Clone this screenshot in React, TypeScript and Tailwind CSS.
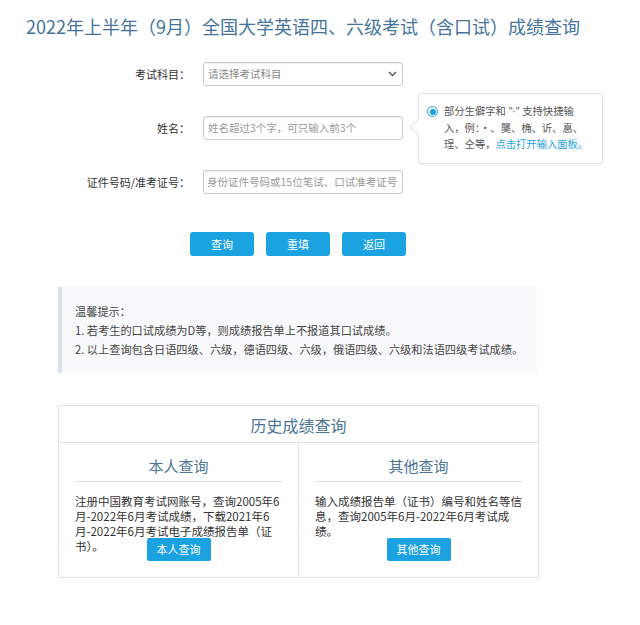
import React from "react";

function Chevron() {
  return (
    <svg width="9" height="6" viewBox="0 0 9 6" fill="none">
      <path d="M1 1l3.5 3.5L8 1" stroke="#555" strokeWidth="1.4" />
    </svg>
  );
}

export default function App() {
  return (
    <div className="w-[640px] min-h-[625px] bg-white font-['Noto_Sans_CJK_SC',sans-serif] text-[#333]">
      <h1 className="pl-[26px] pt-[12px] text-[18px] leading-[28px] text-[#44749c] whitespace-nowrap">
        2022年上半年（9月）全国大学英语四、六级考试（含口试）成绩查询
      </h1>

      <div className="relative mt-[22px]">
        <div className="grid grid-cols-[190px_200px] gap-x-[13px] gap-y-[30px]">
          <div className="text-right text-[11px] leading-[24px] text-[#333]">考试科目：</div>
          <div className="flex h-[24px] items-center justify-between rounded-[3px] border border-[#c9c9c9] pl-[4px] pr-[5px] text-[10.5px] text-[#888] shadow-[inset_0_1px_1px_rgba(0,0,0,0.06)]">
            <span>请选择考试科目</span>
            <Chevron />
          </div>

          <div className="text-right text-[11px] leading-[24px] text-[#333]">姓名：</div>
          <div className="flex h-[24px] items-center rounded-[3px] border border-[#c9c9c9] pl-[4px] text-[10.5px] text-[#999] shadow-[inset_0_1px_1px_rgba(0,0,0,0.06)]">
            姓名超过3个字，可只输入前3个
          </div>

          <div className="text-right text-[11px] leading-[24px] text-[#333]">证件号码/准考证号：</div>
          <div className="flex h-[24px] items-center overflow-hidden whitespace-nowrap rounded-[3px] border border-[#c9c9c9] pl-[3px] text-[10.5px] text-[#999] shadow-[inset_0_1px_1px_rgba(0,0,0,0.06)]">
            身份证件号码或15位笔试、口试准考证号
          </div>
        </div>

        <div className="absolute left-[418px] top-[31px] w-[185px] rounded-[3px] border border-[#dfe3e8] bg-white pb-[11px] pl-[8px] pr-[6px] pt-[9px] shadow-[0_1px_3px_rgba(0,0,0,0.06)]">
          <div className="absolute left-[-7px] top-[27px] h-[12px] w-[12px] rotate-45 border-b border-l border-[#dfe3e8] bg-white" />
          <div className="flex gap-[6px]">
            <div className="mt-[3px] flex h-[11px] w-[11px] shrink-0 items-center justify-center rounded-full border border-[#1ba2e0]">
              <div className="h-[6px] w-[6px] rounded-full bg-[#1ba2e0]" />
            </div>
            <div className="text-[10.3px] leading-[16px] text-[#555] whitespace-nowrap">
              <div>
                部分生僻字和<span className="font-['Liberation_Sans',sans-serif] whitespace-pre"> "·" </span>支持快捷输
              </div>
              <div>入，例：·、龑、桷、䜣、惪、</div>
              <div>
                珵、仝等，<span className="text-[#1ba2e0]">点击打开输入面板。</span>
              </div>
            </div>
          </div>
        </div>
      </div>

      <div className="ml-[190px] mt-[38px] flex gap-[12px]">
        <button className="h-[24px] w-[64px] rounded-[3px] bg-[#1ba2e0] text-[11px] text-white">查询</button>
        <button className="h-[24px] w-[64px] rounded-[3px] bg-[#1ba2e0] text-[11px] text-white">重填</button>
        <button className="h-[24px] w-[64px] rounded-[3px] bg-[#1ba2e0] text-[11px] text-white">返回</button>
      </div>

      <div className="ml-[58px] mt-[31px] w-[479px] border-l-4 border-[#d5e3ef] bg-[#f8f9fa] pb-[14px] pl-[13px] pt-[15px] text-[11.2px] leading-[19px] text-[#444] whitespace-nowrap">
        <div>温馨提示：</div>
        <div>1. 若考生的口试成绩为D等，则成绩报告单上不报道其口试成绩。</div>
        <div>2. 以上查询包含日语四级、六级，德语四级、六级，俄语四级、六级和法语四级考试成绩。</div>
      </div>

      <div className="ml-[58px] mt-[32px] w-[481px] border border-[#e3e3e3]">
        <div className="h-[37px] border-b border-[#e3e3e3] text-center text-[16px] leading-[39px] text-[#4a7598]">
          历史成绩查询
        </div>
        <div className="grid grid-cols-[240px_1fr]">
          <div className="border-r border-[#e3e3e3] px-[16px] pb-[16px] pt-[12px]">
            <div className="border-b border-[#dcdcdc] pb-[4px] text-center text-[15px] leading-[22px] text-[#4a7598]">本人查询</div>
            <div className="mt-[12px] h-[44px] text-[11.5px] leading-[15px] text-[#333] whitespace-nowrap">
              <div>注册中国教育考试网账号，查询2005年6</div>
              <div>月-2022年6月考试成绩，下载2021年6</div>
              <div>月-2022年6月考试电子成绩报告单（证</div>
              <div>书）。</div>
            </div>
            <div className="flex justify-center">
              <button className="h-[23px] w-[64px] rounded-[2px] bg-[#1ba2e0] text-[11px] text-white">本人查询</button>
            </div>
          </div>
          <div className="px-[16px] pb-[16px] pt-[12px]">
            <div className="border-b border-[#dcdcdc] pb-[4px] text-center text-[15px] leading-[22px] text-[#4a7598]">其他查询</div>
            <div className="mt-[12px] h-[44px] text-[11.5px] leading-[15px] text-[#333] whitespace-nowrap">
              <div>输入成绩报告单（证书）编号和姓名等信</div>
              <div>息，查询2005年6月-2022年6月考试成</div>
              <div>绩。</div>
            </div>
            <div className="flex justify-center">
              <button className="h-[23px] w-[64px] rounded-[2px] bg-[#1ba2e0] text-[11px] text-white">其他查询</button>
            </div>
          </div>
        </div>
      </div>
    </div>
  );
}
